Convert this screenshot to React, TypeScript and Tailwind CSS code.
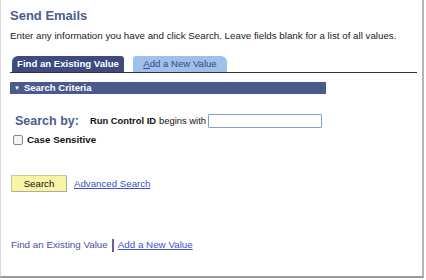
export default function App() {
  return (
    <div className="w-[426px] h-[280px] bg-white font-['Liberation_Sans',Arial,sans-serif]">
      <div className="w-[424px] h-[278px] border-l border-[#d8d8d8] border-r-2 border-r-[#b5b5b5] border-b-2 border-b-[#9a9a9a] pl-[9px] pt-[8px] flex flex-col">
        <h1 className="text-[13px] font-bold text-[#4b5d8f] leading-[15px]">Send Emails</h1>
        <p className="mt-[7px] text-[9.75px] text-[#222] leading-[12px]">
          Enter any information you have and click Search. Leave fields blank for a list of all values.
        </p>

        {/* Tabs */}
        <div className="mt-[14px] mr-[5px] flex items-end gap-[9px] border-b border-[#333] pl-[2px]">
          <div className="h-[16px] w-[112px] rounded-tl-[6px] rounded-tr-[3px] bg-[#3e4b80] text-white text-[9.6px] font-bold flex items-center justify-center">
            Find an Existing Value
          </div>
          <div className="h-[16px] w-[94px] rounded-tl-[3px] rounded-tr-[6px] bg-[#9fc0e8] text-[#2f4b8c] text-[9.6px] flex items-center justify-center">
            <span className="underline">A</span>dd a New Value
          </div>
        </div>

        {/* Search criteria bar */}
        <div className="mt-[9px] w-[316px] h-[12px] bg-[#4b5a8c] text-white text-[9.5px] font-bold flex items-center pl-[4px] gap-[4px]">
          <span className="text-[6px]">▼</span>
          <span>Search Criteria</span>
        </div>

        <div className="mt-[18px] flex items-center pl-[5px]">
          <span className="text-[12.5px] font-bold text-[#4b5d8f] mr-[11px]">Search by:</span>
          <span className="text-[9.4px] font-bold text-[#111]">Run Control ID</span>
          <span className="text-[9.4px] text-[#111] ml-[3px]">begins with</span>
          <input className="ml-[2px] w-[114px] h-[14px] border border-[#7aa3dc] rounded-[1px] outline-none" />
        </div>

        <label className="mt-[2px] flex items-center gap-[4px] pl-[3px]">
          <span className="w-[10px] h-[10px] rounded-[2px] border border-[#8a8a8a] bg-[#f3f3f3]" />
          <span className="text-[9.8px] font-bold text-[#111]">Case Sensitive</span>
        </label>

        <div className="mt-[28px] flex items-center gap-[7px] pl-[1px]">
          <button className="w-[56px] h-[17px] bg-[#f8f4a3] border border-[#c9c9a0] border-r-[#aaa] border-b-[#aaa] text-[9.7px] text-[#111]">
            Search
          </button>
          <a className="text-[9.7px] text-[#3a53c6] underline">Advanced Search</a>
        </div>

        <div className="mt-[46px] flex items-center text-[9.8px] pl-[1px]">
          <span className="text-[#4a4f9a]">Find an Existing Value</span>
          <span className="mx-[4px] w-[2px] h-[13px] bg-[#6e5aa6]" />
          <a className="text-[#3a53c6] underline">Add a New Value</a>
        </div>
      </div>
    </div>
  );
}
